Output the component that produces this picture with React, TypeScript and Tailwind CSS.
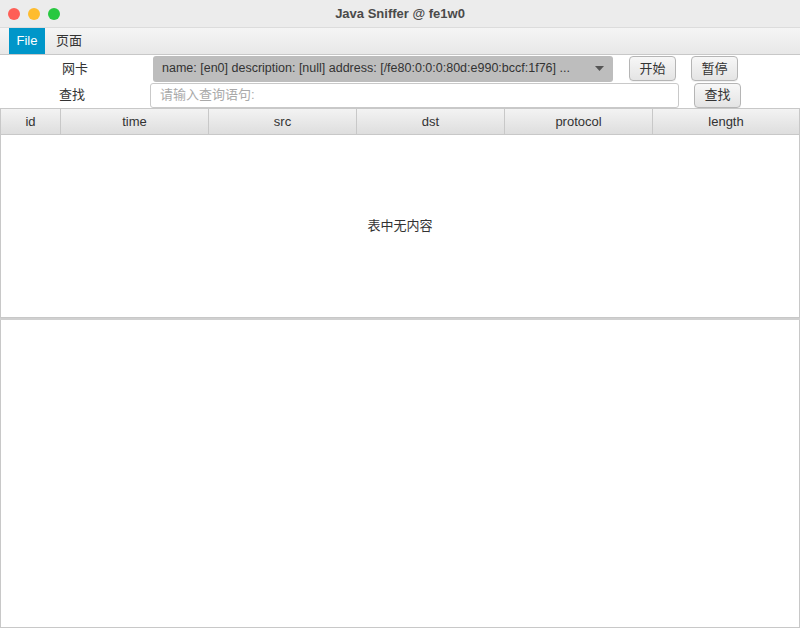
import React from "react";

const columns = [
  { name: "id", width: "w-[60px]" },
  { name: "time", width: "w-[148px]" },
  { name: "src", width: "w-[148px]" },
  { name: "dst", width: "w-[148px]" },
  { name: "protocol", width: "w-[148px]" },
  { name: "length", width: "flex-1" },
];

const font = { fontFamily: '"Liberation Sans", "Noto Sans CJK SC", sans-serif' };

function FxButton({ label, className = "" }: { label: string; className?: string }) {
  return (
    <button
      className={`h-[25px] w-[47px] rounded-[4px] border border-[#b5b5b5] bg-gradient-to-b from-[#f7f7f7] to-[#e4e4e4] text-[13px] text-[#333] shadow-[0_1px_0_rgba(0,0,0,0.05)] ${className}`}
    >
      {label}
    </button>
  );
}

export default function App() {
  return (
    <div className="flex h-[628px] w-[800px] flex-col overflow-hidden bg-white" style={font}>
      {/* Title bar */}
      <div className="relative flex h-[28px] shrink-0 items-center justify-center border-b border-[#dcdcdc] bg-[#ececec]">
        <div className="absolute left-[8px] top-[8px] flex gap-[8px]">
          <span className="h-[12px] w-[12px] rounded-full bg-[#fe5f57]" />
          <span className="h-[12px] w-[12px] rounded-full bg-[#febc2e]" />
          <span className="h-[12px] w-[12px] rounded-full bg-[#28c840]" />
        </div>
        <span className="text-[13px] font-bold text-[#4a4a4a]">Java Sniffer @ fe1w0</span>
      </div>

      {/* Menu bar */}
      <div className="flex h-[27px] shrink-0 items-stretch border-b border-[#c8c8c8] bg-gradient-to-b from-[#f5f5f5] to-[#e8e8e8] pl-[9px]">
        <div className="flex w-[36px] items-center justify-center bg-[#0096c9] text-[13px] text-white">File</div>
        <div className="flex items-center px-[11px] text-[13px] text-[#333]">页面</div>
      </div>

      {/* Controls */}
      <div className="flex h-[27px] shrink-0 items-center">
        <div className="w-[150px] text-center text-[13px] text-[#333]">网卡</div>
        <div className="ml-[3px] flex h-[26px] w-[460px] items-center justify-between rounded-[3px] bg-[#bdbdbd] pl-[9px] pr-[8px] text-[12.5px] text-[#333]">
          <span className="truncate">name: [en0] description: [null] address: [/fe80:0:0:0:80d:e990:bccf:1f76] ...</span>
          <svg width="9" height="5" viewBox="0 0 9 5" className="mr-[1px] shrink-0">
            <path d="M0 0h9L4.5 5z" fill="#555" />
          </svg>
        </div>
        <FxButton label="开始" className="ml-[16px]" />
        <FxButton label="暂停" className="ml-[15px]" />
      </div>
      <div className="flex h-[26px] shrink-0 items-center">
        <div className="w-[144px] text-center text-[13px] text-[#333]">查找</div>
        <div className="ml-[6px] flex h-[25px] w-[529px] items-center rounded-[3px] border border-[#c9c9c9] bg-white px-[9px] text-[13px] text-[#a9a9a9]">
          请输入查询语句:
        </div>
        <FxButton label="查找" className="ml-[15px]" />
      </div>

      {/* Table */}
      <div className="flex h-[210px] shrink-0 flex-col border-x border-b border-[#c8c8c8]">
        <div className="flex h-[27px] shrink-0 border-y border-[#c8c8c8] bg-gradient-to-b from-[#f3f3f3] to-[#dedede]">
          {columns.map((c, i) => (
            <div
              key={c.name}
              className={`${c.width} flex items-center justify-center text-[13px] text-[#333] ${i < columns.length - 1 ? "border-r border-[#c8c8c8]" : ""}`}
            >
              {c.name}
            </div>
          ))}
        </div>
        <div className="flex flex-1 items-center justify-center text-[13px] text-[#333]">表中无内容</div>
      </div>

      {/* Divider + lower pane */}
      <div className="h-[2px] shrink-0 bg-[#d0d0d0]" />
      <div className="flex-1 border-x border-b border-[#c8c8c8] bg-white" />
    </div>
  );
}
